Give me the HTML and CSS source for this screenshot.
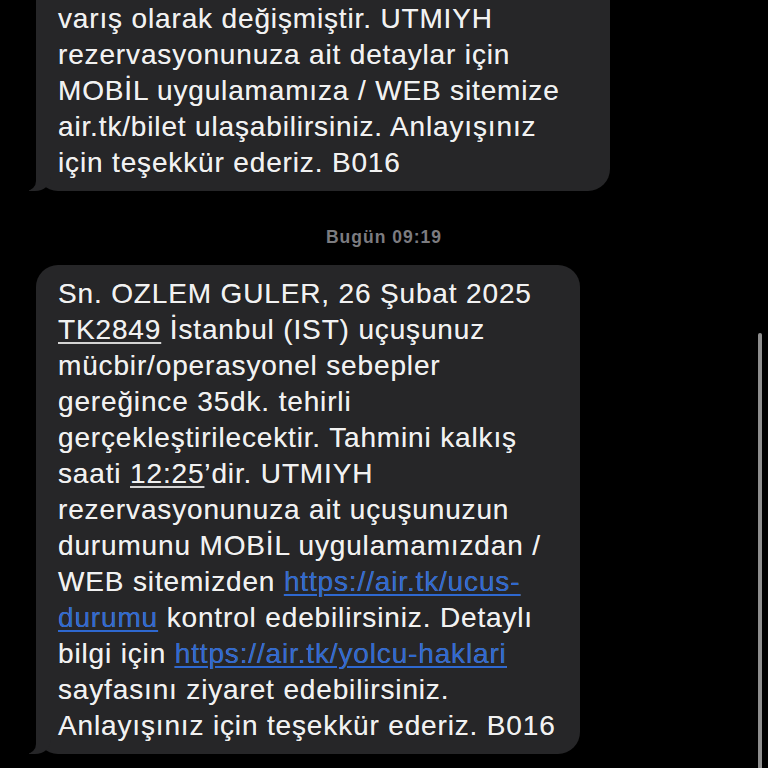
FILE: index.html
```html
<!DOCTYPE html>
<html lang="tr">
<head>
<meta charset="utf-8">
<title>Mesajlar</title>
<link rel="stylesheet" href="styles.css">
</head>
<body>
<div class="thread">
  <div class="bubble first">
    <p class="msg">&nbsp;<br>varış olarak değişmiştir. UTMIYH<br>rezervasyonunuza ait detaylar için<br>MOBİL uygulamamıza / WEB sitemize<br>air.tk/bilet ulaşabilirsiniz. Anlayışınız<br>için teşekkür ederiz. B016</p>
  </div>
  <div class="stamp">Bugün 09:19</div>
  <div class="bubble second">
    <p class="msg">Sn. OZLEM GULER, 26 Şubat 2025<br><span class="detect">TK2849</span> İstanbul (IST) uçuşunuz<br>mücbir/operasyonel sebepler<br>gereğince 35dk. tehirli<br>gerçekleştirilecektir. Tahmini kalkış<br>saati <span class="detect">12:25</span>’dir. UTMIYH<br>rezervasyonunuza ait uçuşunuzun<br>durumunu MOBİL uygulamamızdan /<br>WEB sitemizden <span class="link">https://air.tk/ucus-</span><br><span class="link">durumu</span> kontrol edebilirsiniz. Detaylı<br>bilgi için <span class="link">https://air.tk/yolcu-haklari</span><br>sayfasını ziyaret edebilirsiniz.<br>Anlayışınız için teşekkür ederiz. B016</p>
  </div>
</div>
<div class="scrollbar"></div>
</body>
</html>
```
FILE: styles.css
```css
html, body {
  margin: 0;
  padding: 0;
  background: #000;
  width: 768px;
  height: 768px;
  overflow: hidden;
}
body {
  font-family: "Liberation Sans", Arial, sans-serif;
  color: #f1f1f1;
}
.thread {
  display: flex;
  flex-direction: column;
  align-items: flex-start;
  padding-left: 36px;
}
.bubble {
  position: relative;
  background: #262628;
  border-radius: 22px;
  padding: 11px 22px 10px 22px;
  box-sizing: border-box;
}
.bubble::before {
  content: "";
  position: absolute;
  bottom: 0;
  left: -7px;
  width: 22px;
  height: 22px;
  background: #262628;
  border-bottom-right-radius: 16px 14px;
}
.bubble::after {
  content: "";
  position: absolute;
  bottom: 0;
  left: -26px;
  width: 26px;
  height: 22px;
  background: #000;
  border-bottom-right-radius: 10px;
}
.first {
  margin-top: -46px;
  width: 574px;
}
.second {
  width: 544px;
}
.msg {
  margin: 0;
  font-size: 28px;
  line-height: 36px;
  white-space: nowrap;
  letter-spacing: 0.85px;
  text-shadow: 0 0 0.6px rgba(241, 241, 241, 0.6);
  position: relative;
  z-index: 1;
}
.stamp {
  align-self: stretch;
  margin: 36px 36px 18px 0;
  text-align: center;
  font-size: 17.5px;
  line-height: 20px;
  font-weight: 600;
  letter-spacing: 1px;
  color: #7c7c80;
}
.detect {
  text-decoration: underline;
  text-decoration-color: rgba(255, 255, 255, 0.55);
  text-decoration-thickness: 1.5px;
  text-underline-offset: 3px;
}
.link {
  color: #2e68d0;
  text-decoration: underline;
  text-decoration-thickness: 1.5px;
  text-underline-offset: 3px;
}
.scrollbar {
  position: fixed;
  left: 758px;
  top: 333px;
  bottom: -4px;
  width: 4px;
  border-radius: 2px;
  background: #8e8e8e;
}
```
